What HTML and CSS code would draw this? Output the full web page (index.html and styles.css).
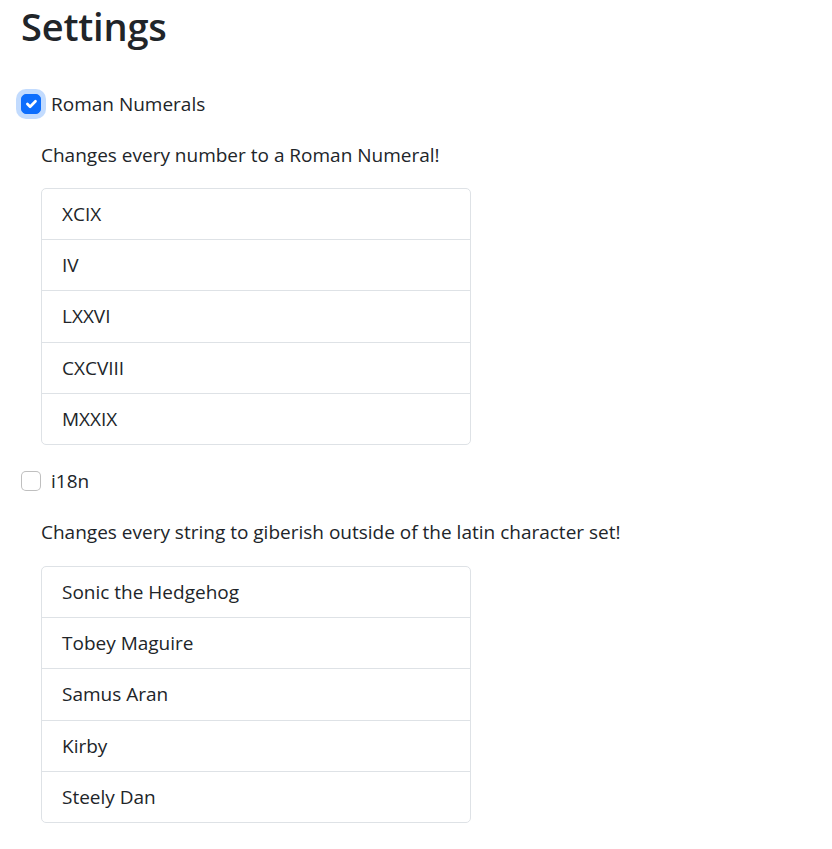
FILE: index.html
```html
<!DOCTYPE html>
<html lang="en">
<head>
<meta charset="utf-8">
<title>Settings</title>
<link rel="stylesheet" href="styles.css">
</head>
<body>
<main class="page">
  <h1 class="title">Settings</h1>

  <section class="setting">
    <label class="check">
      <span class="box box-on">
        <svg viewBox="0 0 20 20" width="20" height="20"><path fill="none" stroke="#fff" stroke-linecap="round" stroke-linejoin="round" stroke-width="3" d="M6 10l3 3l6-6"/></svg>
      </span>
      <span class="check-label">Roman Numerals</span>
    </label>
    <p class="desc">Changes every number to a Roman Numeral!</p>
    <ul class="list">
      <li class="item">XCIX</li>
      <li class="item">IV</li>
      <li class="item">LXXVI</li>
      <li class="item">CXCVIII</li>
      <li class="item">MXXIX</li>
    </ul>
  </section>

  <section class="setting">
    <label class="check">
      <span class="box"></span>
      <span class="check-label">i18n</span>
    </label>
    <p class="desc">Changes every string to giberish outside of the latin character set!</p>
    <ul class="list">
      <li class="item">Sonic the Hedgehog</li>
      <li class="item">Tobey Maguire</li>
      <li class="item">Samus Aran</li>
      <li class="item">Kirby</li>
      <li class="item">Steely Dan</li>
    </ul>
  </section>
</main>
</body>
</html>
```
FILE: styles.css
```css
html, body {
  margin: 0;
  padding: 0;
  background: #fff;
}
body {
  font-family: "Open Sans", "Noto Sans", sans-serif;
  font-size: 19px;
  line-height: 30px;
  color: #212529;
}
.page {
  padding: 0 21px;
}
.title {
  margin: 0;
  font-size: 38px;
  font-weight: 600;
  line-height: 52px;
  letter-spacing: -0.2px;
}
.setting {
  display: flex;
  flex-direction: column;
}
.title + .setting {
  margin-top: 37px;
}
.setting + .setting {
  margin-top: 21px;
}
.check {
  display: flex;
  align-items: center;
  gap: 10px;
  height: 30px;
}
.box {
  width: 20px;
  height: 20px;
  box-sizing: border-box;
  border: 1px solid rgba(0, 0, 0, 0.25);
  border-radius: 5px;
  background: #fff;
  display: flex;
  align-items: center;
  justify-content: center;
  flex: none;
}
.box-on {
  background: #0d6efd;
  border-color: #0d6efd;
  box-shadow: 0 0 0 5px rgba(13, 110, 253, 0.25);
}
.desc {
  margin: 21px 0 18px 20px;
}
.setting + .setting .desc {
  margin-bottom: 19px;
}
.list {
  list-style: none;
  margin: 0 0 0 20px;
  padding: 0;
  width: 430px;
  box-sizing: border-box;
  border: 1px solid #dee2e6;
  border-radius: 5px;
}
.item {
  padding: 10px 20px;
  line-height: 30.2px;
  border-top: 1px solid #dee2e6;
}
.item:first-child {
  border-top: 0;
}
```
